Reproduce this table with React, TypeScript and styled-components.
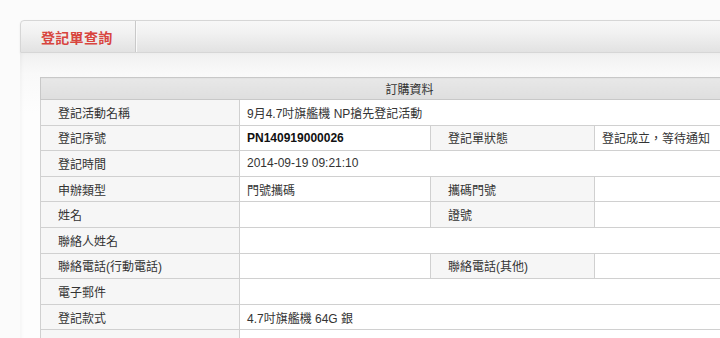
import React from "react";
import styled, { createGlobalStyle } from "styled-components";

const GlobalStyle = createGlobalStyle`
	html, body {
		margin: 0;
		padding: 0;
		background: #fbfbfb;
		overflow: hidden;
	}
	body {
		font-family: "Liberation Sans", "Noto Sans CJK TC", sans-serif;
		color: #333;
	}
`;

type Cell = { label: string; value?: string; bold?: boolean };
type Row = Cell[];

const rows: Row[] = [
	[{ label: "登記活動名稱", value: "9月4.7吋旗艦機 NP搶先登記活動" }],
	[
		{ label: "登記序號", value: "PN140919000026", bold: true },
		{ label: "登記單狀態", value: "登記成立，等待通知" },
	],
	[{ label: "登記時間", value: "2014-09-19 09:21:10" }],
	[
		{ label: "申辦類型", value: "門號攜碼" },
		{ label: "攜碼門號", value: "" },
	],
	[
		{ label: "姓名", value: "" },
		{ label: "證號", value: "" },
	],
	[{ label: "聯絡人姓名", value: "" }],
	[
		{ label: "聯絡電話(行動電話)", value: "" },
		{ label: "聯絡電話(其他)", value: "" },
	],
	[{ label: "電子郵件", value: "" }],
	[{ label: "登記款式", value: "4.7吋旗艦機 64G 銀" }],
	[{ label: "", value: "" }],
];

export default function App() {
	return (
		<Page>
			<GlobalStyle />
			<TabBar>
				<Tab>登記單查詢</Tab>
				<TabRest />
			</TabBar>
			<Panel>
				<Table>
					<colgroup>
						<col style={{ width: 199 }} />
						<col style={{ width: 191 }} />
						<col style={{ width: 164 }} />
						<col />
					</colgroup>
					<thead>
						<tr>
							<HeadCell colSpan={4}>訂購資料</HeadCell>
						</tr>
					</thead>
					<tbody>
						{rows.map((row, i) => (
							<tr key={i}>
								{row.map((cell, j) => (
									<React.Fragment key={j}>
										<LabelCell>{cell.label}</LabelCell>
										<ValueCell colSpan={row.length === 1 ? 3 : 1} bold={cell.bold}>
											{cell.value}
										</ValueCell>
									</React.Fragment>
								))}
							</tr>
						))}
					</tbody>
				</Table>
			</Panel>
		</Page>
	);
}

const Page = styled.div`
	width: 780px;
	padding: 20px 0 0 20px;
`;

const TabBar = styled.div`
	display: flex;
	height: 31px;
	border: 1px solid #d6d6d6;
	border-radius: 4px 0 0 0;
	background: linear-gradient(#f7f7f7 0%, #f1f1f1 40%, #e2e2e2 100%);
	box-shadow: 0 1px 2px rgba(0, 0, 0, 0.08);
`;

const Tab = styled.div`
	width: 94px;
	padding-left: 20px;
	display: flex;
	align-items: center;
	font-size: 14px;
	font-weight: bold;
	letter-spacing: 0.3px;
	color: #d8453e;
	border-right: 1px solid #c9c9c9;
	box-shadow: 1px 0 0 #fafafa;
`;

const TabRest = styled.div`
	flex: 1;
`;

const Panel = styled.div`
	padding: 24px 0 0 20px;
	background: linear-gradient(#f0f0f0 0px, #f9f9f9 20px, #fdfdfd 60px);
	box-shadow: inset 2px 0 3px rgba(0, 0, 0, 0.03);
	height: 300px;
`;

const Table = styled.table`
	width: 739px;
	border-collapse: collapse;
	table-layout: fixed;
	font-size: 12px;
	background: #fff;
`;

const HeadCell = styled.th`
	height: 21px;
	padding: 0;
	font-weight: normal;
	text-align: center;
	color: #333;
	border: 1px solid #c8c8c8;
	background: linear-gradient(#e8e8e8, #dedede);
`;

const LabelCell = styled.td`
	height: 24.6px;
	padding: 0 0 0 17px;
	background: #f6f6f6;
	border: 1px solid #d0d0d0;
	white-space: nowrap;
	overflow: hidden;
`;

const ValueCell = styled.td<{ bold?: boolean }>`
	height: 24.6px;
	padding: 0 0 0 7px;
	background: #fff;
	border: 1px solid #d0d0d0;
	font-weight: ${(p) => (p.bold ? "bold" : "normal")};
	color: ${(p) => (p.bold ? "#111" : "#333")};
	white-space: nowrap;
	overflow: hidden;
`;
